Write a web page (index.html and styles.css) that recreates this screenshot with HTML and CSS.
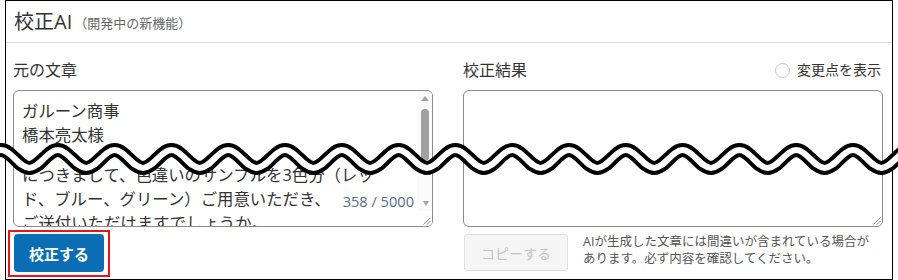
FILE: index.html
```html
<!DOCTYPE html>
<html lang="ja">
<head>
<meta charset="utf-8">
<title>校正AI</title>
<link rel="stylesheet" href="styles.css">
</head>
<body>
<div class="page">
  <div class="panel">
    <div class="panel-header">
      <span class="title">校正AI</span><span class="subtitle">（開発中の新機能）</span>
    </div>
    <div class="panel-body">
      <div class="col">
        <div class="col-head"><span class="label">元の文章</span></div>
        <div class="box">
          <div class="box-text">
            <div class="line">ガルーン商事</div>
            <div class="line">橋本亮太様</div>
            <div class="gap"></div>
            <div class="line">につきまして、色違いのサンプルを3色分（レッ</div>
            <div class="line">ド、ブルー、グリーン）ご用意いただき、</div>
            <div class="line">ご送付いただけますでしょうか。</div>
          </div>
          <div class="scrollbar">
            <div class="sb-btn"><span class="tri-up"></span></div>
            <div class="sb-track"><div class="sb-thumb"></div></div>
            <div class="sb-btn"><span class="tri-down"></span></div>
            <div class="sb-corner"></div>
          </div>
          <span class="counter">358 / 5000</span>
          <svg class="grip" width="10" height="10" viewBox="0 0 10 10"><path d="M9.5 2.5 L2.5 9.5 M9.5 6 L6 9.5" stroke="#8a8a8a" stroke-width="1" fill="none"/></svg>
        </div>
        <div class="actions">
          <div class="highlight"><button class="btn-primary">校正する</button></div>
        </div>
      </div>
      <div class="col">
        <div class="col-head">
          <span class="label">校正結果</span>
          <label class="toggle"><span class="radio"></span>変更点を表示</label>
        </div>
        <div class="box">
          <svg class="grip" width="10" height="10" viewBox="0 0 10 10"><path d="M9.5 2.5 L2.5 9.5 M9.5 6 L6 9.5" stroke="#8a8a8a" stroke-width="1" fill="none"/></svg>
        </div>
        <div class="actions actions-result">
          <button class="btn-copy">コピーする</button>
          <p class="note">AIが生成した文章には間違いが含まれている場合が<br>あります。必ず内容を確認してください。</p>
        </div>
      </div>
    </div>
  </div>
  <svg class="wave" width="898" height="280" viewBox="0 0 898 280">
    <defs>
      <path id="wv" fill="none" d="M -55.8 150 c 10.31 0 18.09 18 28.4 18
      s 18.09 -18 28.4 -18 s 18.09 18 28.4 18 s 18.09 -18 28.4 -18 s 18.09 18 28.4 18
      s 18.09 -18 28.4 -18 s 18.09 18 28.4 18 s 18.09 -18 28.4 -18 s 18.09 18 28.4 18
      s 18.09 -18 28.4 -18 s 18.09 18 28.4 18 s 18.09 -18 28.4 -18 s 18.09 18 28.4 18
      s 18.09 -18 28.4 -18 s 18.09 18 28.4 18 s 18.09 -18 28.4 -18 s 18.09 18 28.4 18
      s 18.09 -18 28.4 -18 s 18.09 18 28.4 18 s 18.09 -18 28.4 -18 s 18.09 18 28.4 18
      s 18.09 -18 28.4 -18 s 18.09 18 28.4 18 s 18.09 -18 28.4 -18 s 18.09 18 28.4 18
      s 18.09 -18 28.4 -18 s 18.09 18 28.4 18 s 18.09 -18 28.4 -18 s 18.09 18 28.4 18
      s 18.09 -18 28.4 -18 s 18.09 18 28.4 18 s 18.09 -18 28.4 -18 s 18.09 18 28.4 18
      s 18.09 -18 28.4 -18"/>
    </defs>
    <use href="#wv" fill="none" stroke="#000" stroke-width="14"/>
    <use href="#wv" fill="none" stroke="#fff" stroke-width="6"/>
  </svg>
</div>
</body>
</html>
```

FILE: styles.css
```css
* { box-sizing: border-box; }
html, body { margin: 0; padding: 0; background: #fff; }
body {
  font-family: "Open Sans", "Noto Sans CJK JP", sans-serif;
  color: #333;
}
.page {
  position: relative;
  width: 898px;
  height: 280px;
  overflow: hidden;
}
.panel {
  margin-left: 5px;
  width: 888px;
  height: 280px;
  border: 1px solid #000;
  display: flex;
  flex-direction: column;
}
.panel-header {
  height: 42px;
  border-bottom: 1px solid #dcdcdc;
  padding: 0 8px;
  display: flex;
  align-items: center;
  gap: 2px;
}
.title { font-size: 20px; line-height: 24px; color: #333; }
.subtitle { font-size: 13px; line-height: 24px; color: #666; padding-top: 2px; }
.panel-body {
  padding: 15px 9px 0 7px;
  display: grid;
  grid-template-columns: 420px 420px;
  column-gap: 30px;
}
.col { display: flex; flex-direction: column; }
.col-head {
  height: 24px;
  margin-bottom: 8px;
  display: flex;
  align-items: center;
  justify-content: space-between;
}
.label { font-size: 16px; line-height: 24px; color: #333; }
.toggle {
  display: flex;
  align-items: center;
  gap: 7px;
  font-size: 14px;
  line-height: 20px;
  color: #333;
  padding-right: 2px;
}
.radio {
  width: 15px;
  height: 15px;
  border: 1px solid #c6c6c6;
  border-radius: 50%;
  background: #fff;
}
.box {
  position: relative;
  height: 137px;
  border: 1px solid #8c8c8c;
  border-radius: 6px;
  background: #fff;
  display: flex;
  overflow: hidden;
}
.box-text {
  flex: 1;
  padding: 8px 8px 0 8px;
  overflow: hidden;
  font-size: 16.4px;
  line-height: 24px;
  color: #333;
  white-space: nowrap;
}
.gap { height: 16px; }
.scrollbar {
  width: 15px;
  display: flex;
  flex-direction: column;
  background: #fbfbfb;
}
.sb-btn {
  height: 15px;
  display: flex;
  align-items: center;
  justify-content: center;
}
.tri-up {
  width: 0; height: 0;
  border-left: 4px solid transparent;
  border-right: 4px solid transparent;
  border-bottom: 5px solid #a3a3a3;
}
.tri-down {
  width: 0; height: 0;
  border-left: 3px solid transparent;
  border-right: 3px solid transparent;
  border-top: 5px solid #a3a3a3;
  margin-left: 2px;
}
.sb-track { flex: 1; display: flex; justify-content: center; }
.sb-thumb {
  margin-top: 3px;
  width: 8px;
  height: 52px;
  border-radius: 4px;
  background: #a0a0a0;
}
.sb-corner { height: 15px; background: #fff; }
.counter {
  position: absolute;
  right: 16px;
  bottom: 14px;
  padding: 0 2px;
  font-size: 14.6px;
  line-height: 22px;
  color: #56698a;
  background: #fff;
}
.grip { position: absolute; right: 1px; bottom: 1px; }
.actions { display: flex; align-items: flex-start; }
.highlight {
  margin-top: 3px;
  margin-left: -5px;
  border: 2px solid #e8141a;
  padding: 2px 4px 3px 4px;
  display: flex;
}
.btn-primary {
  width: 90px;
  height: 38px;
  border: none;
  border-radius: 4px;
  background: #0b6eb4;
  color: #fff;
  font-family: "Noto Sans CJK JP", sans-serif;
  font-size: 15px;
  font-weight: 700;
  padding: 0;
}
.actions-result { margin-top: 7px; gap: 15px; }
.btn-copy {
  margin-left: 1px;
  width: 104px;
  height: 37px;
  border: 1px solid #dedede;
  border-radius: 3px;
  background: #f5f5f5;
  color: #c4c4c4;
  font-family: "Noto Sans CJK JP", sans-serif;
  font-size: 14px;
  padding: 0;
}
.note {
  margin: -1px 0 0 0;
  font-size: 12.5px;
  line-height: 17px;
  color: #555;
  white-space: nowrap;
}
.wave {
  position: absolute;
  left: 0;
  top: 0;
  pointer-events: none;
}
```
